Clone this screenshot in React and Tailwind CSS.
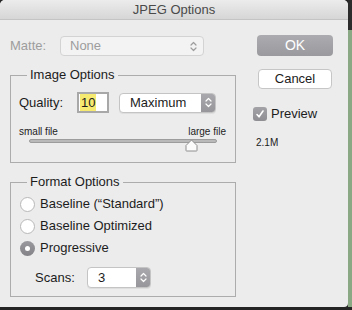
import React from "react";

const font = { fontFamily: '"Liberation Sans", Arial, sans-serif' };

function Chevrons({ color = "#5a5a5a" }) {
  return (
    <svg width="7" height="11" viewBox="0 0 7 11" fill="none" stroke={color} strokeWidth="1.2" strokeLinecap="round" strokeLinejoin="round">
      <path d="M1 4 L3.5 1.5 L6 4" />
      <path d="M1 7 L3.5 9.5 L6 7" />
    </svg>
  );
}

function Stepper({ children, width, height = 20 }) {
  return (
    <div className="flex rounded-[4px] border border-[#c4c4c4] bg-white shadow-[0_1px_0_rgba(0,0,0,0.06)]" style={{ width, height }}>
      <div className="flex-1 pl-[10px] flex items-center text-[13px] text-[#1c1c1c]">{children}</div>
      <div className="w-[14px] flex items-center justify-center rounded-r-[3px] bg-gradient-to-b from-[#a9a9ad] to-[#97979b]">
        <Chevrons color="#ffffff" />
      </div>
    </div>
  );
}

function Radio({ checked, label }) {
  return (
    <div className="h-[22px] flex items-center">
      {checked ? (
        <div className="ml-[1px] w-[15px] h-[15px] rounded-full bg-gradient-to-b from-[#9a9a9e] to-[#838387] flex items-center justify-center">
          <div className="w-[5px] h-[5px] rounded-full bg-white" />
        </div>
      ) : (
        <div className="ml-[1px] w-[15px] h-[15px] rounded-full border border-[#b8b8b8] bg-white" />
      )}
      <span className="ml-[5px] text-[13px] text-[#1c1c1c]">{label}</span>
    </div>
  );
}

export default function App() {
  return (
    <div className="w-[352px] h-[310px] bg-[#242424] overflow-hidden" style={font}>
      <div className="flex h-[307px]">
        <div className="w-[348px] h-[307px] flex flex-col bg-[#ececec] rounded-t-[5px] rounded-br-[4px]">
          {/* Title bar */}
          <div className="h-[20px] flex items-center justify-center rounded-t-[5px] border-b border-[#c4c4c4] bg-gradient-to-b from-[#ececec] to-[#d6d6d6] text-[13px] text-[#4a4a4a]">
            JPEG Options
          </div>

          <div className="flex">
            {/* Left column */}
            <div className="w-[236px] pl-[10px]">
              {/* Matte */}
              <div className="mt-[16px] h-[20px] flex items-center">
                <span className="w-[50px] text-[13px] text-[#9d9d9d]">Matte:</span>
                <div className="w-[144px] h-[20px] flex items-center justify-between pl-[9px] pr-[6px] rounded-[4px] border border-[#d3d3d3] bg-[#f3f3f3] text-[13px] text-[#9d9d9d]">
                  None
                  <Chevrons color="#9d9d9d" />
                </div>
              </div>

              {/* Image Options */}
              <fieldset className="mt-[11px] w-[226px] border border-[#acacac] pl-[8px] pb-[9px]">
                <legend className="ml-[8px] px-[3px] h-[16px] leading-[16px] text-[13px] text-[#1c1c1c]">Image Options</legend>
                <div className="mt-[9px] h-[21px] flex items-center">
                  <span className="w-[58px] text-[13px] text-[#1c1c1c]">Quality:</span>
                  <div className="w-[32px] h-[21px] flex items-center pl-[1px] border-[2px] border-[#a8a8a8] bg-white">
                    <span className="h-[17px] px-[1px] bg-[#f6ea70] text-[13px] leading-[17px] text-[#1c1c1c]">10</span>
                  </div>
                  <div className="ml-[10px]">
                    <Stepper width={97}>Maximum</Stepper>
                  </div>
                </div>
                <div className="mt-[13px] h-[12px] w-[207px] flex justify-between text-[10px] leading-[12px] text-[#1c1c1c]">
                  <span>small file</span>
                  <span>large file</span>
                </div>
                <div className="relative ml-[10px] h-[14px] w-[188px]">
                  <div className="mt-[1px] h-[4px] rounded-full border border-[#9c9c9c] bg-[#b9b9b9]" />
                  <svg className="absolute left-[156px] top-0" width="13" height="13" viewBox="0 0 13 13">
                    <path d="M6.5 1 L12 6.5 L12 11.5 Q12 12 11.5 12 L1.5 12 Q1 12 1 11.5 L1 6.5 Z" fill="#fbfbfb" stroke="#8e8e8e" strokeWidth="1" strokeLinejoin="round" />
                  </svg>
                </div>
              </fieldset>

              {/* Format Options */}
              <fieldset className="mt-[11px] w-[226px] border border-[#acacac] pl-[8px] pb-[8px]">
                <legend className="ml-[8px] px-[3px] h-[16px] leading-[16px] text-[13px] text-[#1c1c1c]">Format Options</legend>
                <div className="mt-[3px]">
                  <Radio label={"Baseline (\u201cStandard\u201d)"} />
                  <Radio label="Baseline Optimized" />
                  <Radio checked label="Progressive" />
                </div>
                <div className="mt-[8px] h-[21px] flex items-center pl-[16px]">
                  <span className="w-[52px] text-[13px] text-[#1c1c1c]">Scans:</span>
                  <Stepper width={64} height={21}>3</Stepper>
                </div>
              </fieldset>
            </div>

            {/* Right column */}
            <div className="ml-[21px] w-[76px]">
              <div className="mt-[15px] h-[21px] flex items-center justify-center rounded-[4px] bg-gradient-to-b from-[#acacb0] to-[#9a9a9e] text-[14px] text-white">
                OK
              </div>
              <div className="mt-[13px] ml-[1px] w-[74px] h-[20px] flex items-center justify-center rounded-[4px] border border-[#c6c6c6] bg-white text-[13px] text-[#1c1c1c]">
                Cancel
              </div>
              <div className="mt-[18px] -ml-[4px] h-[14px] flex items-center">
                <div className="w-[14px] h-[14px] rounded-[3px] bg-gradient-to-b from-[#a3a3a7] to-[#8f8f93] flex items-center justify-center">
                  <svg width="10" height="10" viewBox="0 0 10 10" fill="none" stroke="#ffffff" strokeWidth="1.6" strokeLinecap="round" strokeLinejoin="round">
                    <path d="M2 5.5 L4 7.8 L8 2" />
                  </svg>
                </div>
                <span className="ml-[4px] text-[13px] text-[#1c1c1c]">Preview</span>
              </div>
              <div className="mt-[16px] -ml-[1px] h-[12px] text-[10px] leading-[12px] text-[#1c1c1c]">2.1M</div>
            </div>
          </div>
        </div>

        {/* Right strip */}
        <div className="w-[4px] flex flex-col">
          <div className="h-[30px] bg-[#2c2c2c]" />
          <div className="flex-1 bg-[#8aa884]" />
        </div>
      </div>
    </div>
  );
}
